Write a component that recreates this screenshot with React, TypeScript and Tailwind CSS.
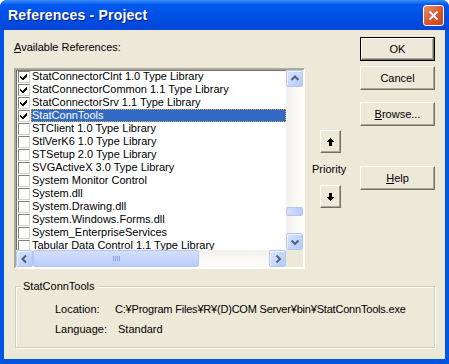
import React from 'react';

const refs = [
    { name: "StatConnectorClnt 1.0 Type Library", checked: true },
    { name: "StatConnectorCommon 1.1 Type Library", checked: true },
    { name: "StatConnectorSrv 1.1 Type Library", checked: true },
    { name: "StatConnTools", checked: true, selected: true },
    { name: "STClient 1.0 Type Library" },
    { name: "StlVerK6 1.0 Type Library" },
    { name: "STSetup 2.0 Type Library" },
    { name: "SVGActiveX 3.0 Type Library" },
    { name: "System Monitor Control" },
    { name: "System.dll" },
    { name: "System.Drawing.dll" },
    { name: "System.Windows.Forms.dll" },
    { name: "System_EnterpriseServices" },
    { name: "Tabular Data Control 1.1 Type Library" },
];

// --- small drawings ---
const Chevron = ({ dir }: { dir: 'up' | 'down' | 'left' | 'right' }) => {
    const d = {
        up: "M1.5 6L5 2.5L8.5 6",
        down: "M1.5 3.5L5 7L8.5 3.5",
        left: "M6 1.5L2.5 5L6 8.5",
        right: "M3.5 1.5L7 5L3.5 8.5",
    };
    return (
        <svg width="10" height="10" viewBox="0 0 10 10">
            <path d={d[dir]} fill="none" stroke="#4D6185" strokeWidth={2} />
        </svg>
    );
};

const ScrollBtn = ({ dir }: { dir: 'up' | 'down' | 'left' | 'right' }) => (
    <div className="w-[17px] h-[17px] shrink-0 rounded-[2px] border border-[#B3C6F3] bg-gradient-to-br from-[#D9E4FD] to-[#B6CAF7] shadow-[inset_1px_1px_0_#EEF3FF] flex items-center justify-center">
        <Chevron dir={dir} />
    </div>
);

const Check = () => (
    <svg width="8" height="8" viewBox="0 0 8 8" shapeRendering="crispEdges">
        <path d="M0 3h1v1h1v1h1V4h1V3h1V2h1V1h1v3H6v1H5v1H4v1H2V6H1V5H0z" fill="#000" />
    </svg>
);

const PriorityArrow = ({ down }: { down?: boolean }) => (
    <svg width="7" height="8" viewBox="0 0 7 8" shapeRendering="crispEdges" className={down ? 'rotate-180' : ''}>
        <path d="M3 0h1v1h1v1h1v1h1v1H5v4H2V4H0V3h1V2h1V1h1z" fill="#000" />
    </svg>
);

const Btn = ({ children, isDefault }: { children: React.ReactNode; isDefault?: boolean }) => (
    <div className={`h-[24px] w-[75px] ${isDefault ? 'border border-black' : ''}`}>
        <div className="h-full w-full border border-t-white border-l-white border-r-[#716F64] border-b-[#716F64] shadow-[inset_-1px_-1px_0_#ACA899] bg-[#ECE9D8] flex items-center justify-center text-[11px] text-black">
            {children}
        </div>
    </div>
);

const SmallBtn = ({ down }: { down?: boolean }) => (
    <div className="w-[21px] h-[23px] border border-t-white border-l-white border-r-[#716F64] border-b-[#716F64] shadow-[inset_-1px_-1px_0_#ACA899] bg-[#ECE9D8] flex items-center justify-center">
        <PriorityArrow down={down} />
    </div>
);

export default function App() {
    return (
        <div className="w-[449px] h-[364px] bg-white" style={{ fontFamily: '"Liberation Sans", Arial, sans-serif' }}>
            <div className="w-full h-full rounded-t-[7px] bg-[#0054E3] flex flex-col overflow-hidden">
                {/* title bar */}
                <div className="h-[30px] shrink-0 bg-gradient-to-b from-[#3C8CF8] via-[#0058EE] via-15% to-[#0045D8] flex items-center pl-[8px] pr-[5px]">
                    <span className="flex-1 text-white font-bold text-[14px] tracking-[0.2px] [text-shadow:1px_1px_0_#0A1883]">
                        References - Project
                    </span>
                    <div className="w-[21px] h-[21px] rounded-[3px] border border-white bg-gradient-to-br from-[#EA8E70] via-[#DA5A32] to-[#C6401A] flex items-center justify-center">
                        <svg width="11" height="11" viewBox="0 0 11 11">
                            <path d="M1.5 1.5L9.5 9.5M9.5 1.5L1.5 9.5" stroke="#fff" strokeWidth={2} />
                        </svg>
                    </div>
                </div>

                {/* client area */}
                <div className="flex-1 mx-[4px] mb-[5px] bg-[#ECE9D8] flex flex-col text-[11px] text-black">
                    <div className="flex pt-[7px]">
                        {/* list column */}
                        <div className="ml-[10px] w-[291px]">
                            <div className="mt-[4px] h-[13px] leading-[13px]">
                                <span className="underline">A</span>vailable References:
                            </div>
                            <div className="mt-[14px] h-[201px] border-2 border-t-[#ACA899] border-l-[#ACA899] border-r-white border-b-white">
                                <div className="h-full w-full flex flex-col bg-white shadow-[inset_1px_1px_0_#716F64]">
                                    <div className="flex h-[180px]">
                                        <div className="flex-1 overflow-hidden">
                                            {refs.map((r, i) => (
                                                <div key={i} className="h-[13px] flex items-center">
                                                    <div className="ml-[2px] w-[12px] h-[12px] shrink-0 border border-t-[#808080] border-l-[#808080] border-r-[#D4D0C8] border-b-[#D4D0C8] bg-white flex items-center justify-center">
                                                        {r.checked && <Check />}
                                                    </div>
                                                    <div className={`ml-[1px] h-[13px] leading-[11px] whitespace-nowrap ${r.selected ? 'flex-1 bg-[#316AC5] text-white border border-dotted border-[#D9A040]' : 'pl-[1px] pt-[1px]'}`}>
                                                        {r.name}
                                                    </div>
                                                </div>
                                            ))}
                                        </div>
                                        {/* vertical scrollbar */}
                                        <div className="w-[17px] flex flex-col bg-gradient-to-r from-[#F3F1EC] to-[#FEFEFB]">
                                            <ScrollBtn dir="up" />
                                            <div className="flex-1 pt-[120px]">
                                                <div className="h-[9px] rounded-[2px] border border-[#B3C6F3] bg-gradient-to-r from-[#D3DFFC] to-[#BACDF8]" />
                                            </div>
                                            <ScrollBtn dir="down" />
                                        </div>
                                    </div>
                                    {/* horizontal scrollbar */}
                                    <div className="h-[17px] flex">
                                        <div className="flex-1 flex bg-gradient-to-b from-[#F3F1EC] to-[#FEFEFB]">
                                            <ScrollBtn dir="left" />
                                            <div className="flex-1 flex">
                                                <div className="w-[166px] h-[17px] rounded-[2px] border border-[#B3C6F3] bg-gradient-to-b from-[#D3DFFC] to-[#BACDF8] flex items-center justify-center gap-[1px]">
                                                    <span className="w-[1px] h-[5px] bg-[#8CA5E0]" />
                                                    <span className="w-[1px] h-[5px] bg-[#8CA5E0]" />
                                                    <span className="w-[1px] h-[5px] bg-[#8CA5E0]" />
                                                    <span className="w-[1px] h-[5px] bg-[#8CA5E0]" />
                                                </div>
                                            </div>
                                            <ScrollBtn dir="right" />
                                        </div>
                                        <div className="w-[17px] bg-[#ECE9D8]" />
                                    </div>
                                </div>
                            </div>
                        </div>

                        {/* priority column */}
                        <div className="w-[55px] flex flex-col">
                            <div className="ml-[15px] mt-[93px]"><SmallBtn /></div>
                            <div className="ml-[7px] mt-[10px] h-[13px] leading-[13px]">Priority</div>
                            <div className="ml-[15px] mt-[9px]"><SmallBtn down /></div>
                        </div>

                        {/* buttons column */}
                        <div className="w-[75px] flex flex-col">
                            <Btn isDefault>OK</Btn>
                            <div className="mt-[5px]"><Btn>Cancel</Btn></div>
                            <div className="mt-[12px]"><Btn><span className="underline">B</span>rowse...</Btn></div>
                            <div className="mt-[40px]"><Btn><span className="underline">H</span>elp</Btn></div>
                        </div>
                    </div>

                    {/* details group box */}
                    <div className="relative ml-[11px] mt-[17px] w-[420px] h-[62px] border border-[#D0D0BF] shadow-[inset_1px_1px_0_#fff,1px_1px_0_#fff]">
                        <div className="absolute -top-[7px] left-[5px] px-[2px] h-[13px] leading-[13px] bg-[#ECE9D8]">StatConnTools</div>
                        <div className="mt-[16px] ml-[39px] h-[13px] leading-[13px] flex whitespace-nowrap">
                            <span className="w-[60px]">Location:</span>
                            <span className="tracking-[-0.2px]">C:¥Program Files¥R¥(D)COM Server¥bin¥StatConnTools.exe</span>
                        </div>
                        <div className="mt-[7px] ml-[39px] h-[13px] leading-[13px] flex whitespace-nowrap">
                            <span className="w-[63px]">Language:</span>
                            <span>Standard</span>
                        </div>
                    </div>
                </div>
            </div>
        </div>
    );
}
